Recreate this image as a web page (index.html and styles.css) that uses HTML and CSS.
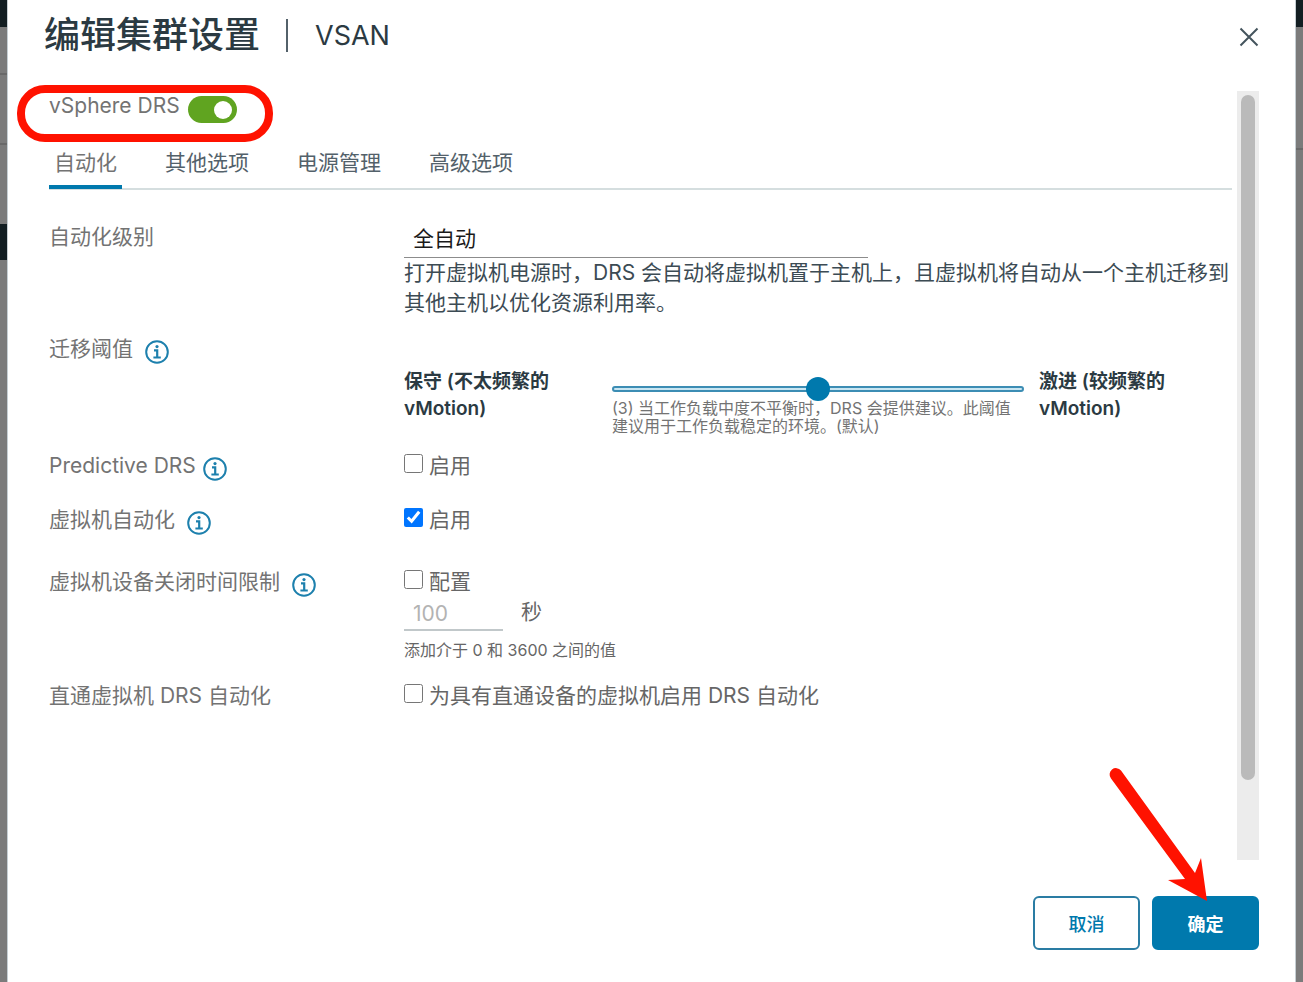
FILE: index.html
```html
<!DOCTYPE html>
<html lang="zh-CN">
<head>
    <meta charset="UTF-8">
    <meta name="viewport" content="width=device-width, initial-scale=1.0">
    <title>编辑集群设置</title>
    <link rel="stylesheet" href="styles.css">
</head>
<body>
    <svg class="sprite" aria-hidden="true">
        <symbol id="info" viewBox="0 0 24 24">
            <circle cx="12" cy="12" r="10.8" fill="none" stroke="currentColor" stroke-width="2"/>
            <circle cx="12" cy="6.6" r="1.6" fill="currentColor"/>
            <path d="M9 10.400h3.200v7M8.400 17.500h7.400" fill="none" stroke="currentColor" stroke-width="2.200"/>
        </symbol>
    </svg>

    <div class="page">
        <div class="backdrop backdrop-left"></div>

        <main class="dialog">
            <header class="dialog-header">
                <h1>编辑集群设置</h1>
                <span class="cluster-name">VSAN</span>
                <button class="close-btn" type="button" aria-label="关闭">
                    <svg viewBox="0 0 20 20" width="20" height="20"><path d="M1.5 1.5l17 17M18.5 1.5l-17 17" fill="none" stroke="currentColor" stroke-width="2"/></svg>
                </button>
            </header>

            <div class="dialog-body">
                <form class="settings" id="drs-form">
                    <div class="drs-toggle">
                        <label for="drs">vSphere DRS</label>
                        <input class="switch" type="checkbox" id="drs" checked>
                        <span class="ring"></span>
                    </div>

                    <nav class="tabs">
                        <a href="#auto" class="tab active">自动化</a>
                        <a href="#other" class="tab">其他选项</a>
                        <a href="#power" class="tab">电源管理</a>
                        <a href="#advanced" class="tab">高级选项</a>
                    </nav>

                    <div class="row">
                        <label class="row-label" for="level">自动化级别</label>
                        <div class="row-content">
                            <select class="level" id="level">
                                <option>全自动</option>
                            </select>
                            <p class="description">打开虚拟机电源时，DRS 会自动将虚拟机置于主机上，且虚拟机将自动从一个主机迁移到其他主机以优化资源利用率。</p>
                        </div>
                    </div>

                    <div class="row">
                        <div class="row-label">
                            <label for="threshold">迁移阈值</label>
                            <svg class="info"><use href="#info"/></svg>
                        </div>
                        <div class="threshold">
                            <strong>保守 (不太频繁的 vMotion)</strong>
                            <div class="slider">
                                <input type="range" id="threshold" min="1" max="5" value="3">
                                <p>(3) 当工作负载中度不平衡时，DRS 会提供建议。此阈值建议用于工作负载稳定的环境。(默认)</p>
                            </div>
                            <strong>激进 (较频繁的 vMotion)</strong>
                        </div>
                    </div>

                    <div class="row">
                        <div class="row-label latin">
                            <span>Predictive DRS</span>
                            <svg class="info"><use href="#info"/></svg>
                        </div>
                        <label class="check"><input type="checkbox">启用</label>
                    </div>

                    <div class="row">
                        <div class="row-label">
                            <span>虚拟机自动化</span>
                            <svg class="info"><use href="#info"/></svg>
                        </div>
                        <label class="check"><input type="checkbox" checked>启用</label>
                    </div>

                    <div class="row row-timeout">
                        <div class="row-label">
                            <span>虚拟机设备关闭时间限制</span>
                            <svg class="info"><use href="#info"/></svg>
                        </div>
                        <div class="row-content">
                            <label class="check"><input type="checkbox">配置</label>
                            <div class="seconds">
                                <input type="text" id="seconds" value="100" disabled>
                                <label for="seconds">秒</label>
                            </div>
                            <p class="hint">添加介于 0 和 3600 之间的值</p>
                        </div>
                    </div>

                    <div class="row">
                        <span class="row-label">直通虚拟机 DRS 自动化</span>
                        <label class="check"><input type="checkbox">为具有直通设备的虚拟机启用 DRS 自动化</label>
                    </div>
                </form>
                <div class="scrollbar"><div class="scrollbar-thumb"></div></div>
            </div>

            <footer class="dialog-footer">
                <button class="btn" type="button">取消</button>
                <button class="btn btn-primary" type="submit" form="drs-form">确定</button>
                <svg class="arrow" viewBox="0 0 98 134"><path d="M3 10.500A6 6 0 0 1 13 2.500L87 105L93 90L99 133L60 112L77 111Z" fill="#ff1200"/></svg>
            </footer>
        </main>

        <div class="backdrop backdrop-right"></div>
    </div>
</body>
</html>
```
FILE: styles.css
```css
* {
    box-sizing: border-box;
}

body {
    margin: 0;
    background: #7b7b7b;
    color: #2b3a42;
    font-family: Inter, "Noto Sans CJK SC", sans-serif;
    font-size: 21px;
    line-height: 30px;
}

h1, p {
    margin: 0;
}

input, select, button {
    font-family: inherit;
    margin: 0;
}

.sprite {
    display: none;
}

.page {
    display: grid;
    grid-template-columns: 7px 1fr 7px;
    min-height: 100vh;
}

.backdrop-left {
    background: linear-gradient(#131e22 27px, #7b7b7b 27px 73px, #696969 73px 75px, #7b7b7b 75px 143px, #696969 143px 145px, #7b7b7b 145px 224px, #131e22 224px 260px, #7b7b7b 260px);
}

.backdrop-right {
    background: linear-gradient(#131e22 27px, #7b7b7b 27px 148px, #696969 148px 150px, #7b7b7b 150px);
}

.dialog {
    display: flex;
    flex-direction: column;
    background: #fff;
    border: solid #c5ced3;
    border-width: 0 1px;
    padding: 0 36px 32px 41px;
}

/* Header */
.dialog-header {
    display: flex;
    align-items: center;
    height: 91px;
    padding-bottom: 21px;
    margin-left: -5px;
}

.dialog-header h1 {
    font-size: 36px;
    line-height: 44px;
    font-weight: 500;
}

.cluster-name {
    border-left: 2px solid #53616a;
    margin-left: 26px;
    padding-left: 27px;
    font-size: 27px;
    line-height: 33px;
}

.close-btn {
    display: flex;
    margin-left: auto;
    padding: 4px 0 0;
    border: none;
    background: none;
    color: #44545d;
}

/* Body */
.dialog-body {
    display: flex;
    flex: 1;
    gap: 5px;
}

.settings {
    flex: 1;
    min-width: 0;
}

.scrollbar {
    width: 22px;
    padding: 4px;
    background: #ececec;
}

.scrollbar-thumb {
    height: 90%;
    border-radius: 7px;
    background: #bababa;
}

.drs-toggle {
    position: relative;
    display: flex;
    gap: 8px;
    height: 32px;
    color: #737373;
}

.switch {
    appearance: none;
    width: 49px;
    height: 27px;
    margin-top: 5px;
    padding: 5px;
    border-radius: 14px;
    background: #60a420;
}

.switch::before {
    content: "";
    display: block;
    width: 18px;
    height: 18px;
    margin-left: auto;
    border-radius: 50%;
    background: #fff;
}

.ring {
    position: absolute;
    left: -32px;
    top: -6px;
    width: 256px;
    height: 57px;
    border: 8px solid #ff1200;
    border-radius: 28px;
}

.tabs {
    display: flex;
    gap: 38px;
    margin: 14px 0 32px;
    border-bottom: 2px solid #d5dedf;
}

.tab {
    padding: 11px 5px 7px;
    margin-bottom: -1px;
    border-bottom: 4px solid transparent;
    color: #53616a;
    text-decoration: none;
}

.tab.active {
    border-color: #0079ad;
    color: #737373;
}

.row {
    display: grid;
    grid-template-columns: 355px 1fr;
    align-items: start;
    min-height: 38px;
    margin-bottom: 16px;
}

.row-timeout {
    margin-top: 24px;
}

.row-label {
    display: flex;
    gap: 12px;
    color: #737373;
}

.row-label.latin {
    gap: 7px;
}

.info {
    width: 24px;
    height: 24px;
    margin-top: 6px;
    color: #1d80ad;
}

.level {
    display: block;
    appearance: none;
    width: 56%;
    height: 36px;
    padding: 0 9px 2px;
    border: none;
    border-bottom: 1px solid #8c8c8c;
    border-radius: 0;
    background: none;
    color: #1a1a1a;
    font-size: 21px;
}

.description {
    color: #3c4b54;
}

.threshold {
    display: grid;
    grid-template-columns: 193px 1fr 193px;
    gap: 15px;
    padding-top: 34px;
}

.threshold strong {
    font-size: 19px;
    line-height: 27px;
    font-weight: 600;
}

.slider input {
    display: block;
    appearance: none;
    width: 100%;
    height: 24px;
    margin-top: 9px;
    background: none;
}

.slider input::-webkit-slider-runnable-track {
    height: 6px;
    border: 2px solid #3c8db4;
    border-radius: 3px;
    background: #c9e6f2;
}

.slider input::-webkit-slider-thumb {
    appearance: none;
    width: 24px;
    height: 24px;
    margin-top: -11px;
    border-radius: 50%;
    background: #0079ad;
}

.slider p {
    margin-top: -2px;
    color: #737373;
    font-size: 16px;
    line-height: 18px;
}

.check {
    display: flex;
    gap: 6px;
    color: #666;
}

.check input {
    width: 19px;
    height: 19px;
    margin-top: 3px;
}

.seconds {
    display: flex;
    gap: 18px;
    color: #666;
}

.seconds input {
    width: 99px;
    height: 34px;
    padding: 0 9px;
    border: none;
    border-bottom: 2px solid #c1c8ca;
    background: none;
    color: #b3b3b3;
    font-size: 21px;
}

.hint {
    margin-top: 4px;
    color: #666;
    font-size: 16px;
}

/* Footer */
.dialog-footer {
    position: relative;
    display: flex;
    justify-content: flex-end;
    gap: 12px;
    margin-top: 36px;
}

.btn {
    width: 107px;
    height: 54px;
    border: 2px solid #2a7ca3;
    border-radius: 6px;
    background: #fff;
    color: #0079ad;
    font-size: 18px;
    font-weight: 500;
}

.btn-primary {
    border-color: #0079ad;
    background: #0079ad;
    color: #fff;
    font-weight: 700;
}

.arrow {
    position: absolute;
    right: 53px;
    bottom: 48px;
    width: 98px;
    height: 134px;
    overflow: visible;
}
```
